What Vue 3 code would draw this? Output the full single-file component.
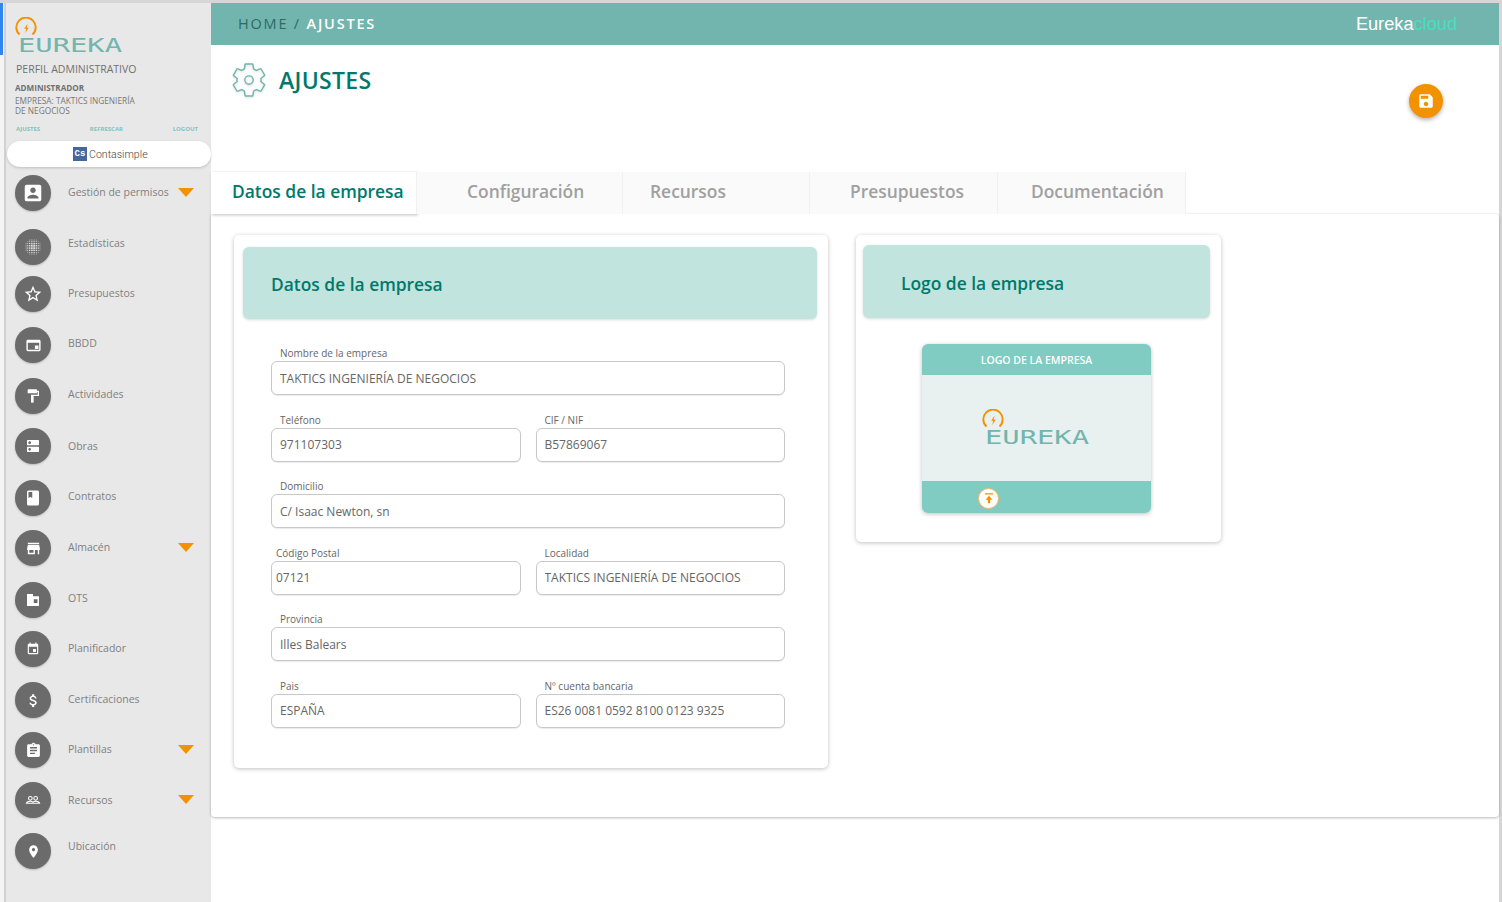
<template>
  <div class="frame">
    <div class="edge"><div class="edge-mark" /></div>

    <aside class="sidebar">
      <div class="profile">
        <svg class="logo" viewBox="0 0 110 42" width="110" height="42">
          <path d="M4.5 17.5a9.7 9.7 0 1 1 13 0" fill="none" stroke="#f39200" stroke-width="1.9" />
          <path d="M12.6 6.5l-3.4 5.2h2.1l-1.1 4.6 3.5-5.6h-2.1z" fill="#f39200" />
          <text x="3" y="35" textLength="104" lengthAdjust="spacingAndGlyphs" font-family="'DejaVu Sans Mono', monospace" font-weight="400" font-size="20" fill="#71b5ae">EUREKA</text>
        </svg>
        <p class="perfil">PERFIL ADMINISTRATIVO</p>
        <p class="rol">ADMINISTRADOR</p>
        <p class="empresa">EMPRESA: TAKTICS INGENIERÍA<br />DE NEGOCIOS</p>
        <div class="links">
          <span>AJUSTES</span>
          <span>REFRESCAR</span>
          <span>LOGOUT</span>
        </div>
      </div>

      <div class="pill">
        <span class="cs-logo">Cs</span>
        <span class="cs-name">Contasimple</span>
      </div>

      <nav class="nav">
        <div v-for="item in menu" :key="item.label" class="nav-row" :style="{ marginTop: item.gap + 'px' }">
          <span class="nav-icon">
            <svg v-if="item.label === 'Estadísticas'" viewBox="0 0 24 24" width="22" height="22">
              <circle v-for="d in dots" :key="d.k" :cx="d.x" :cy="d.y" :r="d.r" fill="#fff" />
            </svg>
            <svg v-else-if="item.label === 'Recursos'" viewBox="0 0 24 24" width="16" height="16" fill="none" stroke="#fff" stroke-width="1.6">
              <circle cx="8" cy="9.5" r="2.8" />
              <circle cx="16" cy="9.5" r="2.8" />
              <path d="M2 17c1-2.5 4-3 6-3s3 .5 4 1.2c1-.7 2-1.2 4-1.2s5 .5 6 3H2z" />
            </svg>
            <svg v-else viewBox="0 0 24 24" :width="item.size" :height="item.size" fill="#fff">
              <path fill-rule="evenodd" :d="item.path" />
            </svg>
          </span>
          <span class="nav-label" :style="{ marginTop: (item.lift || 0) + 'px' }">{{ item.label }}</span>
          <span v-if="item.arrow" class="nav-arrow" />
        </div>
      </nav>
    </aside>

    <main class="main">
      <header class="topbar">
        <div class="crumbs"><span class="crumb-home">HOME / </span><span class="crumb-now">AJUSTES</span></div>
        <div class="brand">Eureka<span>cloud</span></div>
      </header>

      <section class="title-row">
        <svg class="gear" viewBox="0 0 24 24" width="40" height="40" fill="none" stroke="#71b5ae" stroke-width="0.85">
          <path d="M19.14 12.94c.04-.3.06-.61.06-.94 0-.32-.02-.64-.07-.94l2.03-1.58c.18-.14.23-.41.12-.61l-1.92-3.32c-.12-.22-.37-.29-.59-.22l-2.39.96c-.5-.38-1.03-.7-1.62-.94l-.36-2.54c-.04-.24-.24-.41-.48-.41h-3.84c-.24 0-.43.17-.47.41l-.36 2.54c-.59.24-1.13.57-1.62.94l-2.39-.96c-.22-.08-.47 0-.59.22L2.74 8.87c-.12.21-.08.47.12.61l2.03 1.58c-.05.3-.09.63-.09.94s.02.64.07.94l-2.03 1.58c-.18.14-.23.41-.12.61l1.92 3.32c.12.22.37.29.59.22l2.39-.96c.5.38 1.03.7 1.62.94l.36 2.54c.05.24.24.41.48.41h3.84c.24 0 .44-.17.47-.41l.36-2.54c.59-.24 1.13-.56 1.62-.94l2.39.96c.22.08.47 0 .59-.22l1.92-3.32c.12-.22.07-.47-.12-.61l-2.01-1.58z" />
          <circle cx="12" cy="12" r="2.5" />
        </svg>
        <h1 class="title">AJUSTES</h1>
        <button class="fab">
          <svg viewBox="0 0 24 24" width="18" height="18" fill="#fff">
            <path fill-rule="evenodd" d="M17 3H5c-1.11 0-2 .9-2 2v14c0 1.1.89 2 2 2h14c1.1 0 2-.9 2-2V7l-4-4zm-5 16c-1.66 0-3-1.34-3-3s1.34-3 3-3 3 1.34 3 3-1.34 3-3 3zm3-10H5V5h10v4z" />
          </svg>
        </button>
      </section>

      <div class="tabs">
        <div v-for="(tab, i) in tabs" :key="tab.label" class="tab" :class="{ active: i === 0 }" :style="{ width: tab.w + 'px', paddingLeft: tab.pad + 'px' }">{{ tab.label }}</div>
      </div>

      <section class="panel">
        <div class="card card-form">
          <div class="card-head"><h2>Datos de la empresa</h2></div>
          <div class="form">
            <div v-for="(row, r) in form" :key="r" class="form-row">
              <label v-for="f in row" :key="f.label" class="field" :class="{ tight: f.tight }">
                <span class="field-label">{{ f.label }}</span>
                <input class="field-input" :value="f.value" readonly />
              </label>
            </div>
          </div>
        </div>

        <div class="card card-logo">
          <div class="card-head"><h2>Logo de la empresa</h2></div>
          <div class="logo-box">
            <div class="logo-box-head">LOGO DE LA EMPRESA</div>
            <div class="logo-box-body">
              <svg viewBox="0 0 110 42" width="110" height="42">
                <path d="M4.5 17.5a9.7 9.7 0 1 1 13 0" fill="none" stroke="#f39200" stroke-width="1.9" />
                <path d="M12.6 6.5l-3.4 5.2h2.1l-1.1 4.6 3.5-5.6h-2.1z" fill="#f39200" />
                <text x="3" y="35" textLength="104" lengthAdjust="spacingAndGlyphs" font-family="'DejaVu Sans Mono', monospace" font-weight="400" font-size="20" fill="#71b5ae">EUREKA</text>
              </svg>
            </div>
            <div class="logo-box-foot">
              <span class="upload">
                <svg viewBox="0 0 24 24" width="14" height="14" fill="#f39200">
                  <path d="M5 4h14v2H5zM12 8l6 7h-4v6h-4v-6H6z" />
                </svg>
              </span>
            </div>
          </div>
        </div>
      </section>
    </main>
  </div>
</template>

<script setup>
const menu = [
  { label: 'Gestión de permisos', gap: 8, lift: -2, arrow: true, size: 22, path: 'M3 5v14a2 2 0 0 0 2 2h14c1.1 0 2-.9 2-2V5c0-1.1-.9-2-2-2H5a2 2 0 0 0-2 2zm12 4c0 1.66-1.34 3-3 3s-3-1.34-3-3 1.34-3 3-3 3 1.34 3 3zm-9 8c0-2 4-3.1 6-3.1s6 1.1 6 3.1v1H6v-1z' },
  { label: 'Estadísticas', gap: 18, lift: -8 },
  { label: 'Presupuestos', gap: 11, lift: -2, size: 20, path: 'M22 9.24l-7.19-.62L12 2 9.19 8.63 2 9.24l5.46 4.73L5.82 21 12 17.27 18.18 21l-1.63-7.03L22 9.24zM12 15.4l-3.76 2.27 1-4.28-3.32-2.88 4.38-.38L12 6.1l1.71 4.04 4.38.38-3.32 2.88 1 4.28L12 15.4z' },
  { label: 'BBDD', gap: 15, lift: -4, size: 17, path: 'M20 4H4c-1.1 0-2 .9-2 2v12c0 1.1.9 2 2 2h16c1.1 0 2-.9 2-2V6c0-1.1-.9-2-2-2zm0 14H4V8h16v10zM14 12h5v5h-5z' },
  { label: 'Actividades', gap: 15, lift: -4, size: 16, path: 'M18 4V3c0-.55-.45-1-1-1H5c-.55 0-1 .45-1 1v4c0 .55.45 1 1 1h12c.55 0 1-.45 1-1V6h1v4H9v11c0 .55.45 1 1 1h2c.55 0 1-.45 1-1v-9h8V4h-3z' },
  { label: 'Obras', gap: 14, size: 16, path: 'M20 13H4c-.55 0-1 .45-1 1v6c0 .55.45 1 1 1h16c.55 0 1-.45 1-1v-6c0-.55-.45-1-1-1zM7 19c-1.1 0-2-.9-2-2s.9-2 2-2 2 .9 2 2-.9 2-2 2zM20 3H4c-.55 0-1 .45-1 1v6c0 .55.45 1 1 1h16c.55 0 1-.45 1-1V4c0-.55-.45-1-1-1zM7 9c-1.1 0-2-.9-2-2s.9-2 2-2 2 .9 2 2-.9 2-2 2z' },
  { label: 'Contratos', gap: 16, lift: -4, size: 18, path: 'M18 2H6c-1.1 0-2 .9-2 2v16c0 1.1.9 2 2 2h12c1.1 0 2-.9 2-2V4c0-1.1-.9-2-2-2zM6 4h5v8l-2.5-1.5L6 12V4z' },
  { label: 'Almacén', gap: 14, lift: -2, arrow: true, size: 17, path: 'M20 4H4v2h16V4zm1 10v-2l-1-5H4l-1 5v2h1v6h10v-6h4v6h2v-6h1zm-9 4H6v-4h6v4z' },
  { label: 'OTS', gap: 16, lift: -4, size: 18, path: 'M12 7V4H4v16h16V7h-8zm6 9h-5v-5h5v5z' },
  { label: 'Planificador', gap: 13, lift: -2, size: 14, path: 'M17 12h-5v5h5v-5zM16 1v2H8V1H6v2H5c-1.11 0-1.99.9-1.99 2L3 19c0 1.1.89 2 2 2h14c1.1 0 2-.9 2-2V5c0-1.1-.9-2-2-2h-1V1h-2zm3 18H5V8h14v11z' },
  { label: 'Certificaciones', gap: 15, lift: -2, size: 17, path: 'M11.8 10.9c-2.27-.59-3-1.2-3-2.15 0-1.09 1.01-1.85 2.7-1.85 1.78 0 2.44.85 2.5 2.1h2.21c-.07-1.72-1.12-3.3-3.21-3.81V3h-3v2.16c-1.94.42-3.5 1.68-3.5 3.61 0 2.31 1.91 3.46 4.7 4.13 2.5.6 3 1.48 3 2.41 0 .69-.49 1.79-2.7 1.79-2.06 0-2.87-.92-2.98-2.1h-2.2c.12 2.19 1.76 3.42 3.68 3.83V21h3v-2.15c1.95-.37 3.5-1.5 3.5-3.55 0-2.84-2.43-3.81-4.7-4.4z' },
  { label: 'Plantillas', gap: 14, lift: -2, arrow: true, size: 17, path: 'M19 3h-4.18C14.4 1.84 13.3 1 12 1c-1.3 0-2.4.84-2.82 2H5c-1.1 0-2 .9-2 2v14c0 1.1.9 2 2 2h14c1.1 0 2-.9 2-2V5c0-1.1-.9-2-2-2zm-7 0c.55 0 1 .45 1 1s-.45 1-1 1-1-.45-1-1 .45-1 1-1zm2 14H7v-2h7v2zm3-4H7v-2h10v2zm0-4H7V7h10v2z' },
  { label: 'Recursos', gap: 14, arrow: true },
  { label: 'Ubicación', gap: 15, lift: -10, size: 15, path: 'M12 2C8.13 2 5 5.13 5 9c0 5.25 7 13 7 13s7-7.75 7-13c0-3.87-3.13-7-7-7zm0 9.5c-1.38 0-2.5-1.12-2.5-2.5s1.12-2.5 2.5-2.5 2.5 1.12 2.5 2.5-1.12 2.5-2.5 2.5z' }
]

// dotted disc of the Estadísticas icon: dots shrink towards the rim
const dots = []
for (let i = -4; i <= 4; i++) {
  for (let j = -4; j <= 4; j++) {
    const dist = Math.hypot(i, j)
    if (dist <= 4.6) dots.push({ k: `${i}_${j}`, x: 12 + i * 1.9, y: 12 + j * 1.9, r: 0.85 - dist * 0.09 })
  }
}

const tabs = [
  { label: 'Datos de la empresa', w: 206, pad: 21 },
  { label: 'Configuración', w: 206, pad: 50 },
  { label: 'Recursos', w: 187, pad: 27 },
  { label: 'Presupuestos', w: 188, pad: 40 },
  { label: 'Documentación', w: 188, pad: 33 }
]

const form = [
  [{ label: 'Nombre de la empresa', value: 'TAKTICS INGENIERÍA DE NEGOCIOS' }],
  [{ label: 'Teléfono', value: '971107303' }, { label: 'CIF / NIF', value: 'B57869067' }],
  [{ label: 'Domicilio', value: 'C/ Isaac Newton, sn' }],
  [{ label: 'Código Postal', value: '07121', tight: true }, { label: 'Localidad', value: 'TAKTICS INGENIERÍA DE NEGOCIOS' }],
  [{ label: 'Provincia', value: 'Illes Balears' }],
  [{ label: 'Pais', value: 'ESPAÑA' }, { label: 'Nº cuenta bancaria', value: 'ES26 0081 0592 8100 0123 9325' }]
]
</script>

<style>
html, body { margin: 0; background: #fff; overflow: hidden; }
</style>

<style scoped>
* { box-sizing: border-box; }
.frame { display: flex; height: 902px; border-top: 3px solid #d6d6d6; border-right: 3px solid #d6d6d6; font-family: "Open Sans", sans-serif; color: #666; background: #fff; }

.edge { width: 6px; flex: none; border-right: 2px solid #d2d2d2; background: #f4f4f4; }
.edge-mark { width: 3px; height: 52px; background: #2f86f0; }

.sidebar { width: 205px; flex: none; background: #e8e8e8; padding-left: 1px; display: flex; flex-direction: column; }
.profile { padding: 14px 0 0 9px; height: 138px; }
.logo { display: block; margin-left: -1px; }
.perfil { margin: 3px 0 0; font-size: 10.5px; line-height: 14px; color: #707070; }
.rol { margin: 6px 0 0 -1px; font-size: 8.1px; line-height: 12px; font-weight: 700; color: #707070; }
.empresa { margin: 2px 0 0 -1px; font-size: 8.3px; line-height: 10px; color: #777; }
.links { display: flex; justify-content: space-between; width: 182px; margin-top: 8px; font-size: 6px; line-height: 10px; font-weight: 700; color: #80c4bc; }

.pill { width: 204px; height: 26px; padding-left: 2px; background: #fff; border-radius: 13px; box-shadow: 0 1px 3px rgba(0,0,0,0.18); display: flex; align-items: center; justify-content: center; gap: 2px; position: relative; z-index: 2; }
.cs-logo { width: 14px; height: 14px; background: #44689c; color: #fff; font-size: 9px; line-height: 14px; text-align: center; font-family: "Liberation Mono", monospace; font-weight: 700; }
.cs-name { font-size: 10.6px; font-family: Roboto, sans-serif; font-weight: 300; color: #444; width: 58px; white-space: nowrap; }

.nav { padding-left: 8px; }
.nav-row { height: 36px; display: flex; align-items: center; position: relative; }
.nav-icon { width: 36px; height: 36px; border-radius: 50%; background: #6b6b6b; box-shadow: 0 1px 2px rgba(0,0,0,0.2); display: flex; align-items: center; justify-content: center; flex: none; }
.nav-label { margin-left: 17px; font-size: 10.5px; color: #808080; white-space: nowrap; }
.nav-arrow { position: absolute; left: 163px; top: 13px; width: 0; height: 0; border-left: 8px solid transparent; border-right: 8px solid transparent; border-top: 9px solid #f39200; }

.main { flex: 1; min-width: 0; display: flex; flex-direction: column; }
.topbar { height: 42px; background: #71b5ae; display: flex; align-items: center; justify-content: space-between; padding: 0 42px 2px 27px; flex: none; }
.crumbs { font-size: 14.5px; letter-spacing: 1.8px; }
.crumb-home { color: #2e6a65; }
.crumb-now { color: #fff; font-weight: 600; }
.brand { margin-top: 2px; font-family: "Liberation Sans", sans-serif; font-size: 18.2px; color: #fff; }
.brand span { color: #45e0c0; }

.title-row { height: 127px; flex: none; display: flex; align-items: flex-start; padding: 15px 56px 0 18px; }
.gear { flex: none; filter: drop-shadow(0 1px 1px rgba(0,0,0,0.15)); }
.title { margin: 4px 0 0 10px; font-size: 23px; line-height: 32px; letter-spacing: 0.3px; font-weight: 600; color: #00796b; flex: 1; }
.fab { width: 34px; height: 34px; margin-top: 24px; border: none; border-radius: 50%; background: #f39200; box-shadow: 0 2px 4px rgba(0,0,0,0.3); display: flex; align-items: center; justify-content: center; padding: 0; }

.tabs { display: flex; height: 42px; flex: none; position: relative; z-index: 1; }
.tab { background: #fafafa; border-right: 1px solid #f0f0f0; font-size: 17.4px; line-height: 39px; font-weight: 600; color: #a0a0a0; white-space: nowrap; }
.tab.active { background: #fff; color: #00796b; box-shadow: 1px 1px 3px rgba(0,0,0,0.25); }

.panel { height: 603px; background: #fff; border-radius: 0 4px 4px 4px; box-shadow: 0 1px 3px rgba(0,0,0,0.25), 0 0 2px rgba(0,0,0,0.08); display: flex; align-items: flex-start; gap: 28px; padding: 21px 0 0 23px; }

.card { background: #fff; border-radius: 5px; box-shadow: 0 1px 4px rgba(0,0,0,0.25); flex: none; }
.card-form { width: 594px; height: 533px; padding: 12px 11px 0 9px; }
.card-logo { width: 365px; height: 307px; padding: 10px 11px 0 7px; }
.card-head { height: 72px; padding: 2px 0 0 28px; background: #c1e4df; border-radius: 6px; box-shadow: 0 1px 3px rgba(0,0,0,0.15); display: flex; align-items: center; }
.card-logo .card-head { height: 73px; padding: 3px 0 0 38px; }
.card-head h2 { margin: 0; font-size: 17.4px; font-weight: 600; color: #00796b; }

.form { width: 514px; margin: 28px 0 0 28px; display: flex; flex-direction: column; gap: 18.5px; }
.form-row { display: flex; gap: 15px; }
.field { flex: 1; min-width: 0; display: flex; flex-direction: column; }
.field-label { font-size: 10px; line-height: 13px; margin-bottom: 1px; padding-left: 9px; color: #666; }
.field-input { width: 100%; height: 34px; border: 1px solid #c8c8c8; border-radius: 6px; padding: 0 8px; font: 12px "Open Sans", sans-serif; color: #666; outline: none; background: #fff; box-shadow: 0 1px 1px rgba(0,0,0,0.08); }
.field.tight .field-label { padding-left: 5px; }
.field.tight .field-input { padding-left: 4px; }

.logo-box { width: 229px; height: 169px; margin: 26px 0 0 59px; border-radius: 6px; overflow: hidden; box-shadow: 0 1px 4px rgba(0,0,0,0.25); display: flex; flex-direction: column; }
.logo-box-head { height: 31px; padding-top: 1px; flex: none; background: #80cbc2; color: #fff; font-size: 10.5px; font-weight: 600; line-height: 31px; text-align: center; box-shadow: 0 1px 2px rgba(0,0,0,0.12); }
.logo-box-body { flex: 1; background: #e8f1ef; display: flex; align-items: center; justify-content: center; padding-top: 4px; }
.logo-box-foot { height: 32px; padding: 2px 0 0 56px; flex: none; background: #80cbc2; display: flex; align-items: center; }
.upload { width: 21px; height: 21px; border-radius: 50%; background: #fff; border: 1px solid #f6b860; display: flex; align-items: center; justify-content: center; }
</style>
